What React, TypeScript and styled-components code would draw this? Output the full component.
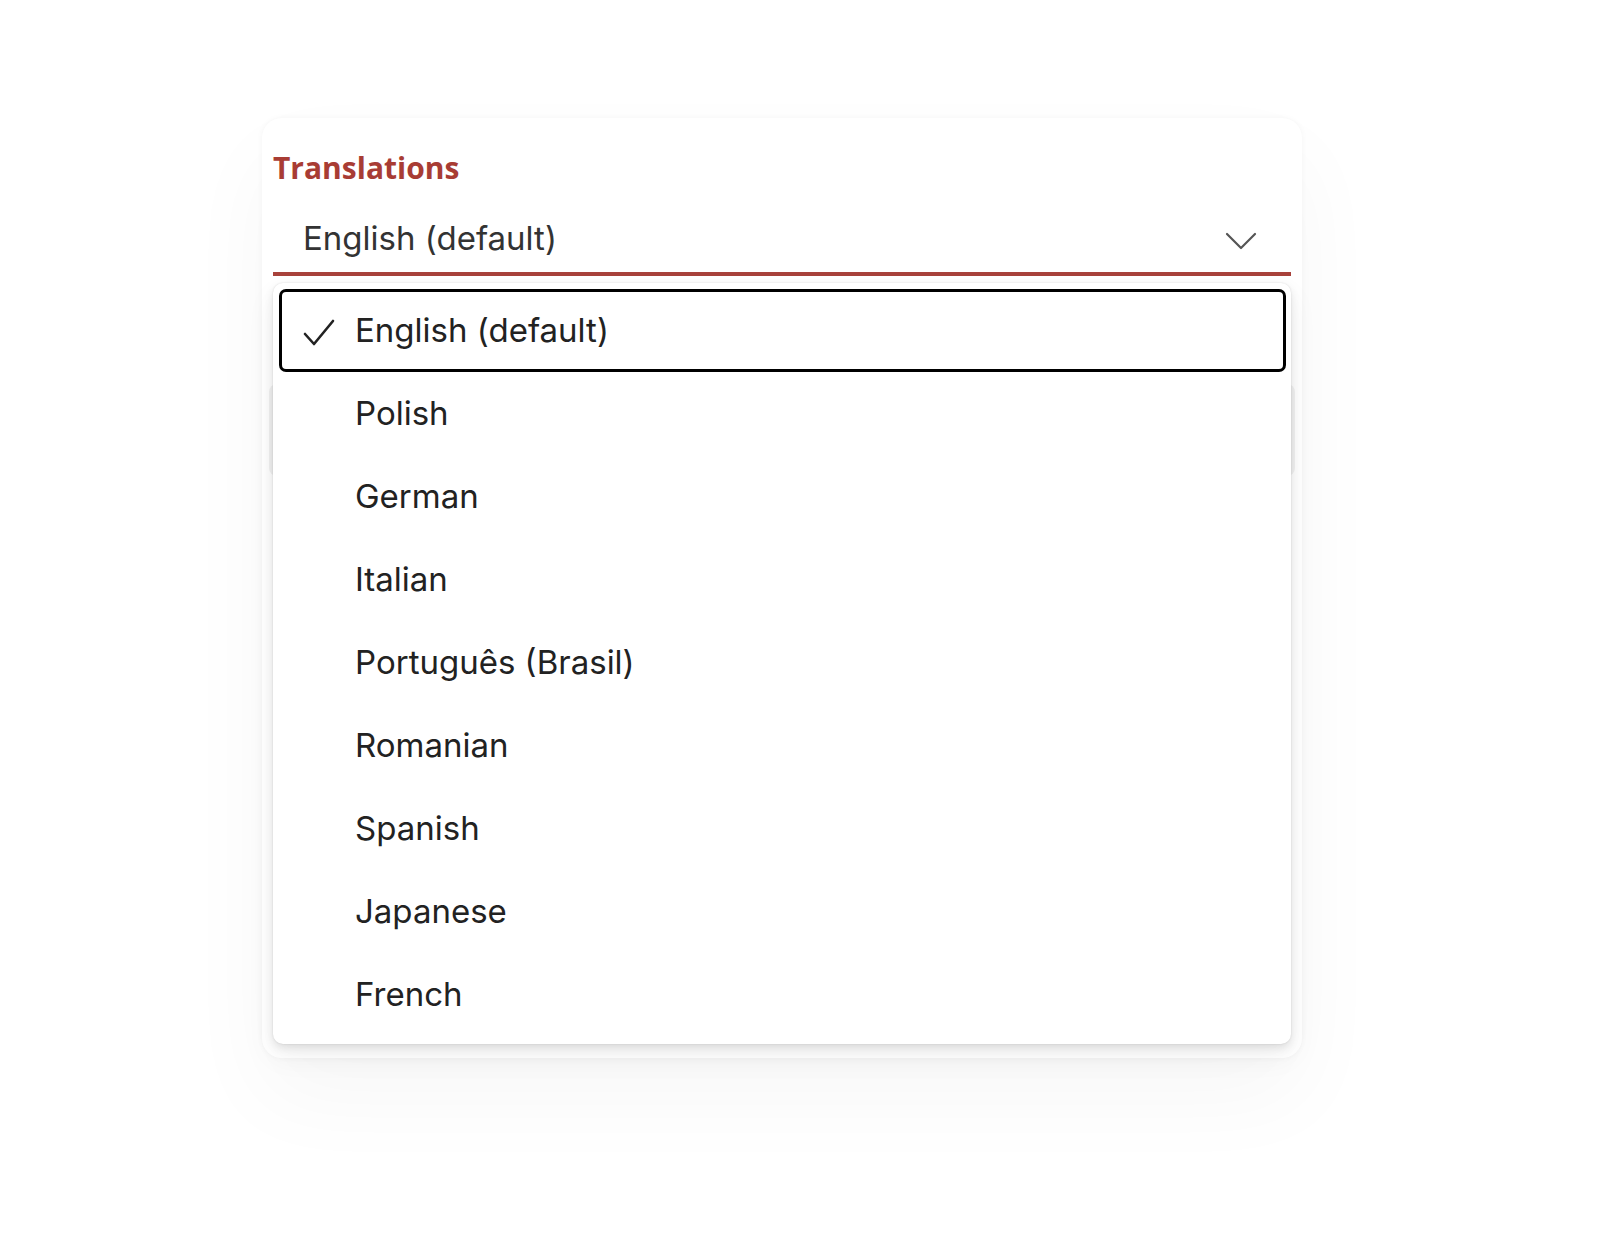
import styled, { createGlobalStyle } from "styled-components";

const GlobalStyle = createGlobalStyle`
  body {
    margin: 0;
    background: #ffffff;
    font-family: Inter, "Noto Sans", sans-serif;
  }
`;

const Page = styled.div`
  padding: 118px 0 0 262px;
  height: 1236px;
  box-sizing: border-box;
`;

const Card = styled.div`
  position: relative;
  width: 1040px;
  height: 940px;
  box-sizing: border-box;
  padding: 30px 11px 0 11px;
  background: #ffffff;
  border-radius: 20px;
  box-shadow: 0 0 6px rgba(0, 0, 0, 0.04), 0 40px 90px rgba(0, 0, 0, 0.035);
`;

const Title = styled.h2`
  margin: 0;
  font-family: "Open Sans", Lato, sans-serif;
  font-weight: 700;
  font-size: 30px;
  line-height: 40px;
  color: #a83c34;
`;

const SelectBox = styled.div`
  margin-top: 14px;
  height: 74px;
  display: flex;
  align-items: center;
  justify-content: space-between;
  padding: 2px 34px 0 30px;
  border-bottom: 4px solid #a8423b;
  box-sizing: border-box;
  font-size: 33px;
  color: #333333;
`;

const Chevron = styled.svg`
  width: 32px;
  height: 18px;
  margin-top: 6px;
`;

const Field = styled.div`
  margin-top: 108px;
  height: 92px;
  margin-left: -4px;
  margin-right: -4px;
  border-radius: 8px;
  background: #f2f2f2;
`;

const Menu = styled.ul`
  position: absolute;
  left: 11px;
  right: 11px;
  top: 165px;
  margin: 0;
  padding: 6px 5px 8px 6px;
  list-style: none;
  background: #ffffff;
  border-radius: 10px;
  box-shadow: 0 0 2px rgba(0, 0, 0, 0.12), 0 4px 10px rgba(0, 0, 0, 0.1),
    0 12px 30px rgba(0, 0, 0, 0.06);
`;

const Item = styled.li<{ $selected?: boolean }>`
  height: 83px;
  box-sizing: border-box;
  display: flex;
  align-items: center;
  padding-left: 73px;
  position: relative;
  font-size: 33px;
  color: #222222;
  border-radius: 7px;
  border: 3px solid ${(p) => (p.$selected ? "#000000" : "transparent")};
  padding-bottom: 1px;
`;

const Check = styled.svg`
  position: absolute;
  left: 21px;
  top: 27px;
  width: 32px;
  height: 28px;
`;

const languages = [
  "English (default)",
  "Polish",
  "German",
  "Italian",
  "Português (Brasil)",
  "Romanian",
  "Spanish",
  "Japanese",
  "French",
];

const App = () => {
  return (
    <Page>
      <GlobalStyle />
      <Card>
        <Title>Translations</Title>
        <SelectBox>
          <span>English (default)</span>
          <Chevron viewBox="0 0 32 18" fill="none">
            <path
              d="M2 2l14 14L30 2"
              stroke="#555555"
              strokeWidth={2.2}
              strokeLinecap="round"
              strokeLinejoin="round"
            />
          </Chevron>
        </SelectBox>
        <Field />
        <Menu>
          {languages.map((lang, i) => (
            <Item key={lang} $selected={i === 0}>
              {i === 0 && (
                <Check viewBox="0 0 32 28" fill="none">
                  <path
                    d="M2 15l9 10L30 2"
                    stroke="#222222"
                    strokeWidth={2.6}
                    strokeLinecap="round"
                    strokeLinejoin="round"
                  />
                </Check>
              )}
              {lang}
            </Item>
          ))}
        </Menu>
      </Card>
    </Page>
  );
};

export default App;
